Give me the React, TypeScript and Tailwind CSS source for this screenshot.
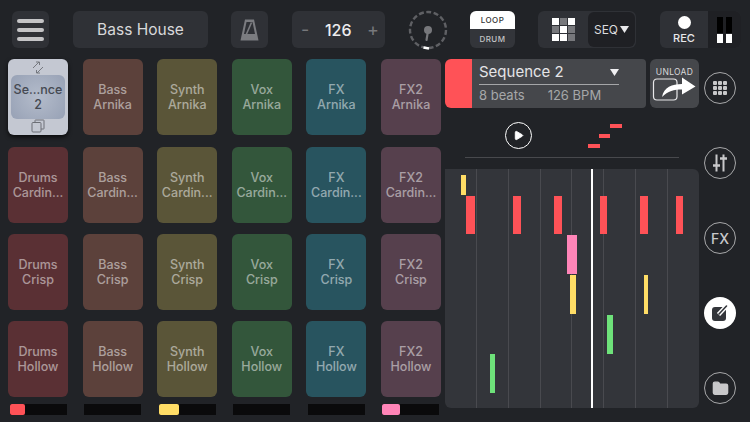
import { Play, Folder } from "lucide-react";

const rows = [
  ["Arnika", "Arnika", "Arnika", "Arnika", "Arnika"],
  ["Cardin...", "Cardin...", "Cardin...", "Cardin...", "Cardin...", "Cardin..."],
  ["Crisp", "Crisp", "Crisp", "Crisp", "Crisp", "Crisp"],
  ["Hollow", "Hollow", "Hollow", "Hollow", "Hollow", "Hollow"],
];

const tracks = [
  { name: "Drums", bg: "bg-[#5a3034]" },
  { name: "Bass", bg: "bg-[#5c413b]" },
  { name: "Synth", bg: "bg-[#5a5538]" },
  { name: "Vox", bg: "bg-[#33563b]" },
  { name: "FX", bg: "bg-[#28545f]" },
  { name: "FX2", bg: "bg-[#56404d]" },
];

const notes = [
  "left-[16px] top-[6px] w-[5px] h-[20px] bg-[#ffdd66]",
  "left-[21px] top-[27px] w-[9px] h-[38px] bg-[#ff5257]",
  "left-[68px] top-[27px] w-[8px] h-[38px] bg-[#ff5257]",
  "left-[109px] top-[27px] w-[8px] h-[38px] bg-[#ff5257]",
  "left-[155px] top-[27px] w-[7px] h-[38px] bg-[#ff5257]",
  "left-[195px] top-[27px] w-[8px] h-[38px] bg-[#ff5257]",
  "left-[231px] top-[27px] w-[7px] h-[38px] bg-[#ff5257]",
  "left-[122px] top-[66px] w-[10px] h-[39px] bg-[#ff85b8]",
  "left-[125px] top-[106px] w-[6px] h-[39px] bg-[#ffdd66]",
  "left-[199px] top-[106px] w-[4px] h-[39px] bg-[#ffdd66]",
  "left-[162px] top-[146px] w-[6px] h-[39px] bg-[#6ee27a]",
  "left-[45px] top-[185px] w-[5px] h-[39px] bg-[#6ee27a]",
];

function Pad({ name, sub, bg }: { name: string; sub: string; bg: string }) {
  return (
    <div className={`${bg} h-[76px] rounded-md flex flex-col items-center justify-center text-[12.5px] leading-[15px] font-medium text-white/50`}>
      <span>{name}</span>
      <span>{sub}</span>
    </div>
  );
}

function SelectedPad() {
  return (
    <div className="h-[76px] rounded-md bg-[#c4c8d2] flex flex-col items-center justify-between py-[2px] shadow-[0_2px_4px_rgba(0,0,0,0.7)]">
      <svg width="14" height="13" viewBox="0 0 14 13" fill="none" stroke="#75787f" strokeWidth="1">
        <path d="M2 7 L8 1 M5 1 H8.5 V4 M12 6 L6 12 M9 12 H5.5 V9" />
      </svg>
      <div className="w-[54px] h-[44px] rounded-md bg-[radial-gradient(circle,#b4bccb,#97a1b5)] flex flex-col items-center justify-center text-[12.5px] leading-[15px] font-medium text-[#454952]">
        <span>Se...nce</span>
        <span>2</span>
      </div>
      <svg width="14" height="14" viewBox="0 0 14 14" fill="none" stroke="#6c6f76" strokeWidth="1">
        <rect x="1" y="3.5" width="9" height="9.5" rx="1" />
        <path d="M4 3.5 V1.5 Q4 1 4.5 1 H12.5 Q13 1 13 1.5 V9.5 Q13 10 12.5 10 H10" />
      </svg>
    </div>
  );
}

function Round({ children, active }: { children: React.ReactNode; active?: boolean }) {
  return (
    <div className={`w-[32px] h-[32px] rounded-full flex items-center justify-center ${active ? "bg-white" : "border border-white/60"}`}>
      {children}
    </div>
  );
}

function TopBar() {
  return (
    <div className="flex h-[37px] ml-[12px] mt-[11px] text-white">
      <div className="w-[37px] rounded-md bg-[#2f3136] flex flex-col items-center justify-center gap-[5px]">
        <div className="w-[27px] h-[4px] rounded-full bg-[#c4c4c6]" />
        <div className="w-[27px] h-[4px] rounded-full bg-[#c4c4c6]" />
        <div className="w-[27px] h-[4px] rounded-full bg-[#c4c4c6]" />
      </div>
      <div className="ml-[24px] w-[135px] rounded-md bg-[#2f3136] flex items-center justify-center text-[15.5px] text-[#d8d8da]">Bass House</div>
      <div className="ml-[23px] w-[37px] rounded-md bg-[#2f3136] flex items-center justify-center">
        <svg width="19" height="22" viewBox="0 0 19 22">
          <path d="M5 0.5 H14 L18.5 21.5 H0.5 Z" fill="#7b7c80" />
          <path d="M6.5 3 H12.5 L15 15 H4 Z" fill="#2f3136" />
          <path d="M6 16 L11.5 3.5" stroke="#7b7c80" strokeWidth="1.6" />
        </svg>
      </div>
      <div className="ml-[24px] w-[93px] rounded-md bg-[#2f3136] flex items-center justify-between pl-[9px] pr-[6px] text-[#77787c] text-[18px]">
        <span>-</span>
        <span className="text-[16px] font-medium text-[#ececee]">126</span>
        <span>+</span>
      </div>
      <svg className="ml-[23px] mt-[-1px]" width="40" height="40" viewBox="0 0 40 40" fill="none">
        <circle cx="20" cy="20" r="18" stroke="#5f6064" strokeWidth="2.4" strokeDasharray="5 2.5" />
        <path d="M15.5 37.5 L21 38.5" stroke="#fff" strokeWidth="2.5" />
        <circle cx="20" cy="20" r="4" fill="#77787c" />
        <path d="M20 21 L18.5 30" stroke="#77787c" strokeWidth="2.2" strokeLinecap="round" />
      </svg>
      <div className="ml-[22px] w-[45px] flex flex-col text-[8px] font-medium tracking-[0.5px]">
        <div className="h-[18px] rounded-t-md bg-white text-[#333] flex items-center justify-center">LOOP</div>
        <div className="h-[19px] rounded-b-md bg-[#33353a] text-[#c4c4c6] flex items-center justify-center">DRUM</div>
      </div>
      <div className="ml-[23px] w-[98px] rounded-md bg-[#2f3136] flex items-center">
        <div className="w-[50px] flex justify-center">
          <div className="grid grid-cols-3 gap-[1px]">
            <div className="w-[7px] h-[7px] bg-white" />
            <div className="w-[7px] h-[7px] bg-[#77787c]" />
            <div className="w-[7px] h-[7px] bg-white" />
            <div className="w-[7px] h-[7px] bg-[#77787c]" />
            <div className="w-[7px] h-[7px] bg-white" />
            <div className="w-[7px] h-[7px] bg-[#77787c]" />
            <div className="w-[7px] h-[7px] bg-white" />
            <div className="w-[7px] h-[7px] bg-white" />
            <div className="w-[7px] h-[7px] bg-[#77787c]" />
          </div>
        </div>
        <div className="w-[47px] h-[35px] rounded-md bg-[#1f2024] flex items-center justify-center gap-[2px] text-[12px] text-[#dcdcde]">
          <span>SEQ</span>
          <svg width="9" height="7" viewBox="0 0 9 7"><path d="M0 0 H9 L4.5 7 Z" fill="#e8e8ea" /></svg>
        </div>
      </div>
      <div className="ml-[24px] w-[81px] rounded-md bg-[#2f3136] flex items-center">
        <div className="w-[48px] flex flex-col items-center gap-[3px]">
          <div className="w-[13px] h-[13px] rounded-full bg-white" />
          <span className="text-[11px] leading-[12px] font-medium text-[#e8e8ea]">REC</span>
        </div>
        <div className="w-[33px] h-[37px] rounded-r-md bg-[#1f2024] flex items-center justify-center gap-[3px]">
          <div className="w-[6px] h-[26px] flex flex-col gap-[1px]">
            <div className="flex-1 bg-black" />
            <div className="h-[9px] bg-white" />
          </div>
          <div className="w-[6px] h-[26px] flex flex-col gap-[1px]">
            <div className="flex-1 bg-black" />
            <div className="h-[9px] bg-white" />
          </div>
        </div>
      </div>
    </div>
  );
}

function Meter({ fill }: { fill?: string }) {
  return (
    <div className="mx-[1.5px] h-[11px] bg-[#0a0a0b]">
      {fill && <div className={`h-full rounded-[2px] ${fill}`} />}
    </div>
  );
}

function Pads() {
  return (
    <div className="ml-[8px] mt-[0.1px] w-[433px]">
      <div className="grid grid-cols-[repeat(6,60px)] gap-x-[14.6px] gap-y-[11.45px]">
        {rows.map((row, r) =>
          tracks.map((t, c) => {
            if (r === 0 && c === 0) return <SelectedPad key="selected" />;
            return <Pad key={`${r}-${c}`} name={t.name} bg={t.bg} sub={r === 0 ? row[c - 1] : row[c]} />;
          }),
        )}
      </div>
      <div className="grid grid-cols-[repeat(6,60px)] gap-x-[14.6px] mt-[6.6px]">
        <Meter fill="w-[15px] bg-[#ff5257]" />
        <Meter />
        <Meter fill="w-[20px] bg-[#ffdd66]" />
        <Meter />
        <Meter />
        <Meter fill="w-[18px] bg-[#ff85b8]" />
      </div>
    </div>
  );
}

function SeqPanel() {
  return (
    <div className="ml-[4px] w-[254px]">
      <div className="flex h-[49px]">
        <div className="w-[27px] rounded-l-md bg-[#ff5257]" />
        <div className="w-[174px] bg-[#45474b] pl-[7px] pr-[27px] pt-[2px] rounded-r-sm">
          <div className="flex items-center justify-between h-[24px] border-b border-[#a5a6a8] text-[15px] text-[#e4e4e6]">
            <span>Sequence 2</span>
            <svg width="9" height="7" viewBox="0 0 9 7"><path d="M0 0 H9 L4.5 7 Z" fill="#f0f0f2" /></svg>
          </div>
          <div className="flex gap-[23px] mt-[2px] text-[13px] leading-[16px] text-[#a6a7a9]">
            <span>8 beats</span>
            <span>126 BPM</span>
          </div>
        </div>
        <div className="ml-[4px] w-[49px] rounded-md bg-[#45474b] flex flex-col items-center pt-[8px]">
          <span className="text-[8.5px] leading-[11px] text-[#d8d8da] tracking-[0.3px]">UNLOAD</span>
          <svg className="mt-[-3px]" width="45" height="26" viewBox="0 0 45 26" fill="none">
            <rect x="1.5" y="4" width="23.5" height="21" rx="3.5" stroke="#e8e8ea" strokeWidth="1.2" />
            <path d="M10 22 C12 12 20 9 30 9 V2.5 L43.5 11.5 L30 19.5 V14.5 C22 14.5 16 16 10 22 Z" fill="#fff" />
          </svg>
        </div>
      </div>
      <div className="relative h-[50px] border-b border-[#48494d] mx-[20px]">
        <div className="absolute left-[40px] top-[14px] w-[27px] h-[27px] rounded-full border-[1.5px] border-white flex items-center justify-center">
          <Play size={11} fill="#fff" stroke="#fff" />
        </div>
        <div className="absolute left-[123px] top-[36px] w-[12px] h-[4px] bg-[#ff5257]" />
        <div className="absolute left-[134px] top-[26px] w-[11px] h-[4px] bg-[#ff5257]" />
        <div className="absolute left-[145px] top-[16px] w-[12px] h-[4px] bg-[#ff5257]" />
      </div>
      <div className="relative mt-[11px] h-[239px] rounded-r-md rounded-b-md bg-[#33353a] overflow-hidden">
        <div className="absolute inset-0 flex pl-[31px]">
          {[0, 1, 2, 3, 4, 5, 6].map((i) => (
            <div key={i} className="w-[31.8px] h-full border-l border-[#494a4f]" />
          ))}
        </div>
        {notes.map((n) => (
          <div key={n} className={`absolute ${n}`} />
        ))}
        <div className="absolute left-[146px] top-0 bottom-0 w-[2px] bg-white" />
      </div>
    </div>
  );
}

function SideIcons() {
  return (
    <div className="ml-[5px] w-[32px] flex flex-col items-center gap-[43px] mt-[13px] text-[#c8c8ca]">
      <Round>
        <div className="grid grid-cols-3 gap-[1px]">
          {[0, 1, 2, 3, 4, 5, 6, 7, 8].map((i) => (
            <div key={i} className="w-[4px] h-[4px] rounded-[1px] bg-[#c8c8ca]" />
          ))}
        </div>
      </Round>
      <Round>
        <svg width="16" height="18" viewBox="0 0 16 18" fill="none" stroke="#c8c8ca">
          <path d="M4.5 0.5 V17.5 M11.5 0.5 V17.5" strokeWidth="2" />
          <path d="M1 11.5 H8 M8 4.5 H15" strokeWidth="2.6" />
        </svg>
      </Round>
      <Round>
        <span className="text-[14px] font-medium">FX</span>
      </Round>
      <Round active>
        <svg width="20" height="20" viewBox="0 0 20 20" fill="none">
          <rect x="2" y="4" width="14" height="14" rx="3" fill="#33353a" />
          <path d="M8.5 11.5 L17 2.5" stroke="#fff" strokeWidth="4.4" />
          <path d="M9 11 L16.5 3" stroke="#33353a" strokeWidth="1.6" strokeLinecap="round" />
        </svg>
      </Round>
      <Round>
        <Folder size={17} fill="#c8c8ca" stroke="#c8c8ca" />
      </Round>
    </div>
  );
}

export default function App() {
  return (
    <div className="w-[750px] h-[422px] overflow-hidden bg-[#212327] font-['Inter',sans-serif]">
      <TopBar />
      <div className="flex mt-[11px]">
        <Pads />
        <SeqPanel />
        <SideIcons />
      </div>
    </div>
  );
}
